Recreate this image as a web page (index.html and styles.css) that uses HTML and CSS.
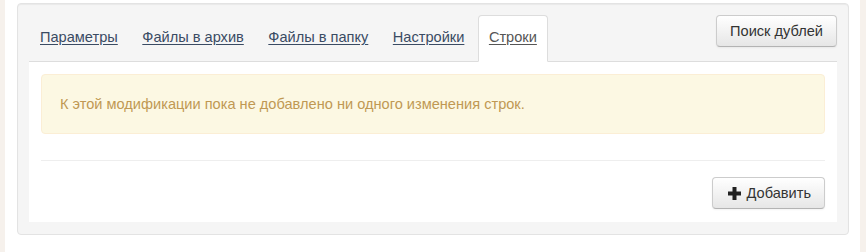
FILE: index.html
```html
<!DOCTYPE html>
<html lang="ru">
<head>
<meta charset="utf-8">
<title>Строки</title>
<link rel="stylesheet" href="styles.css">
</head>
<body>
<div class="wrap">
  <div class="panel">
    <div class="tabbar">
      <ul class="tabs">
        <li class="tab"><a href="#">Параметры</a></li>
        <li class="tab"><a href="#">Файлы в архив</a></li>
        <li class="tab"><a href="#">Файлы в папку</a></li>
        <li class="tab"><a href="#">Настройки</a></li>
        <li class="tab active"><a href="#">Строки</a></li>
      </ul>
      <button class="btn btn-dup">Поиск дублей</button>
    </div>
    <div class="content">
      <div class="alert">К этой модификации пока не добавлено ни одного изменения строк.</div>
      <hr class="sep">
      <div class="actions">
        <button class="btn btn-add"><svg class="plus" width="13" height="13" viewBox="0 0 13 13"><path d="M4.5 0h4v4.5H13v4H8.5V13h-4V8.5H0v-4h4.5z" fill="#222"/></svg>Добавить</button>
      </div>
    </div>
  </div>
</div>
</body>
</html>
```
FILE: styles.css
```css
html, body {
  margin: 0;
  padding: 0;
}
body {
  background: #f6f1ec;
  font-family: "Liberation Sans", Arial, sans-serif;
  font-size: 14.6px;
  line-height: 20px;
  color: #333;
  height: 252px;
}
.wrap {
  margin: 0 6px 0 5px;
  background: #fff;
  padding: 3px 11px 0 12px;
  height: 249px;
}
.panel {
  background: #f5f5f5;
  border: 1px solid #e3e3e3;
  border-radius: 4px;
  padding: 11px 11px 12px 11px;
  box-shadow: inset 0 1px 1px rgba(0,0,0,0.05);
}
.tabbar {
  display: flex;
  align-items: flex-start;
  justify-content: space-between;
  border-bottom: 1px solid #ddd;
}
.tabs {
  list-style: none;
  margin: 0 0 -1px 0;
  padding: 0;
  display: flex;
}
.tab {
  margin-right: 2.5px;
}
.tab a {
  display: block;
  padding: 11px 10px 14px;
  border: 1px solid transparent;
  border-radius: 4px 4px 0 0;
  color: #3a4b63;
  text-decoration: underline;
  text-underline-offset: 2px;
}
.tab.active a {
  background: #fff;
  border-color: #ddd #ddd transparent;
  color: #555;
}
.btn {
  font-family: "Liberation Sans", Arial, sans-serif;
  font-size: 14.6px;
  line-height: 20px;
  color: #333;
  padding: 5px 13px;
  border: 1px solid #ccc;
  border-bottom-color: #b3b3b3;
  border-radius: 4px;
  background: linear-gradient(#ffffff, #e6e6e6);
  box-shadow: inset 0 1px 0 rgba(255,255,255,0.2), 0 1px 2px rgba(0,0,0,0.05);
  display: inline-flex;
  align-items: center;
}
.content {
  background: #fff;
  padding: 12px 12px 13px;
}
.alert {
  background: #fcf8e3;
  border: 1px solid #fbeed5;
  border-radius: 4px;
  color: #c09853;
  padding: 19px 18px;
}
.sep {
  margin: 26px 0 15px;
  border: 0;
  border-top: 1px solid #eee;
  border-bottom: 1px solid #fff;
}
.actions {
  display: flex;
  justify-content: flex-end;
}
.btn-add {
  padding-left: 15px;
  padding-right: 13px;
}
.plus {
  margin-right: 6px;
}
```
